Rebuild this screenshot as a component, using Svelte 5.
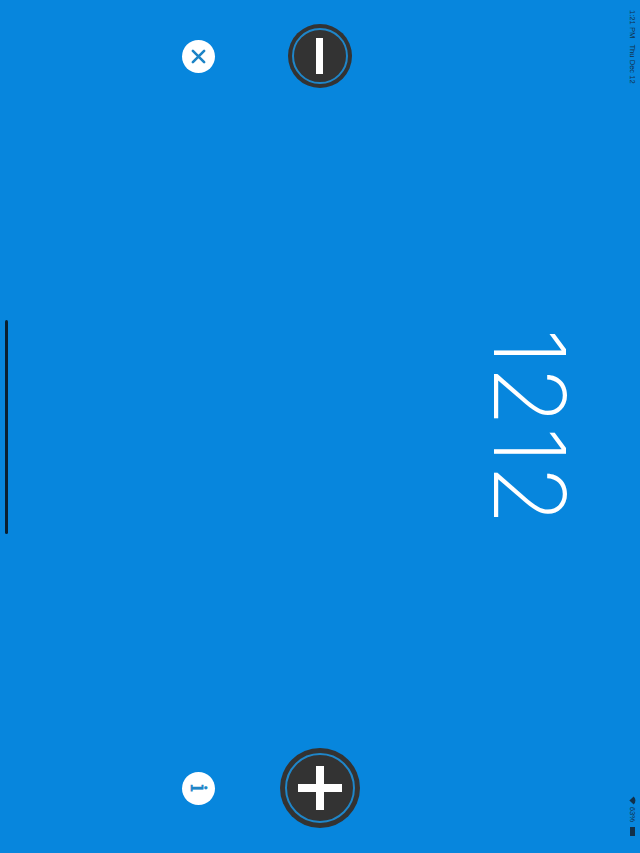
<script lang="ts">
	const value = 1212;
</script>

<div class="screen">
	<div class="stage">
		<div class="status">
			<span>1:21 PM&nbsp;&nbsp; Thu Dec 12</span>
			<div class="status-right">
				<svg class="wifi" viewBox="0 0 10 8" width="9" height="7">
					<path d="M5 7.6 L0.4 2.6 C3 0 7 0 9.6 2.6 Z" fill="#12304a" />
				</svg>
				<span>63%</span>
				<div class="battery"></div>
			</div>
		</div>

		<div class="number">{value}</div>

		<div class="controls">
			<div class="side minus-side">
				<button class="round small-round" aria-label="minus">
					<span class="ring"></span>
					<span class="bar"></span>
				</button>
				<button class="dot" aria-label="close">
					<svg viewBox="0 0 16 16" width="15" height="15">
						<path d="M2 2 L14 14 M14 2 L2 14" stroke="#1d84c6" stroke-width="2.8" stroke-linecap="round" />
					</svg>
				</button>
			</div>
			<div class="side plus-side">
				<button class="round big-round" aria-label="plus">
					<span class="ring"></span>
					<span class="bar"></span>
					<span class="bar upright"></span>
				</button>
				<button class="dot info">i</button>
			</div>
		</div>

		<div class="home-wrap"><div class="home"></div></div>
	</div>
</div>

<style>
	:global(body) {
		margin: 0;
		overflow: hidden;
	}
	.screen {
		width: 640px;
		height: 853px;
		overflow: hidden;
		background: #0786dd;
	}
	/* the app is in landscape, so everything is laid out turned 90deg */
	.stage {
		width: 853px;
		height: 640px;
		display: flex;
		flex-direction: column;
		transform-origin: top left;
		transform: translateX(640px) rotate(90deg);
		font-family: 'Liberation Sans', Arial, sans-serif;
	}
	.status {
		display: flex;
		justify-content: space-between;
		align-items: center;
		height: 15px;
		padding: 0 17px 0 10px;
		font-size: 7.6px;
		color: #12304a;
		white-space: pre;
	}
	.status-right {
		display: flex;
		align-items: center;
		gap: 2px;
	}
	.battery {
		width: 9px;
		height: 5px;
		margin-left: 3px;
		background: #12304a;
	}
	.number {
		margin-top: 35px;
		text-align: center;
		font-family: Inter, sans-serif;
		font-weight: 200;
		font-size: 99px;
		line-height: 120px;
		color: #fff;
	}
	.controls {
		display: flex;
		justify-content: space-between;
		margin-top: 110px;
		padding: 0 25px 0 16px;
	}
	.side {
		width: 80px;
		display: flex;
		flex-direction: column;
		align-items: center;
		height: 178px;
		justify-content: flex-end;
	}
	button {
		padding: 0;
		border: none;
	}
	.round {
		position: relative;
		display: grid;
		place-items: center;
		border-radius: 50%;
		background: #333333;
	}
	.small-round {
		width: 64px;
		height: 64px;
		margin-bottom: 73px;
	}
	.big-round {
		width: 80px;
		height: 80px;
		margin-bottom: 65px;
	}
	.ring {
		position: absolute;
		inset: 4px;
		border: 2.5px solid #1f86c9;
		border-radius: 50%;
	}
	.big-round .ring {
		inset: 5px;
	}
	.bar {
		position: absolute;
		width: 36px;
		height: 7px;
		background: #fff;
	}
	.big-round .bar {
		width: 44px;
		height: 8px;
	}
	.big-round .bar.upright {
		width: 8px;
		height: 44px;
	}
	.dot {
		display: grid;
		place-items: center;
		width: 33px;
		height: 33px;
		border-radius: 50%;
		background: #fff;
	}
	.info {
		font-family: 'DejaVu Serif', serif;
		font-weight: 400;
		font-size: 23px;
		line-height: 1;
		color: #1d84c6;
		-webkit-text-stroke: 0.7px #1d84c6;
	}
	.home-wrap {
		margin-top: auto;
		padding-bottom: 5px;
		display: flex;
		justify-content: flex-start;
		padding-left: 320px;
	}
	.home {
		width: 214px;
		height: 3px;
		border-radius: 2px;
		background: #0a2030;
	}
</style>
